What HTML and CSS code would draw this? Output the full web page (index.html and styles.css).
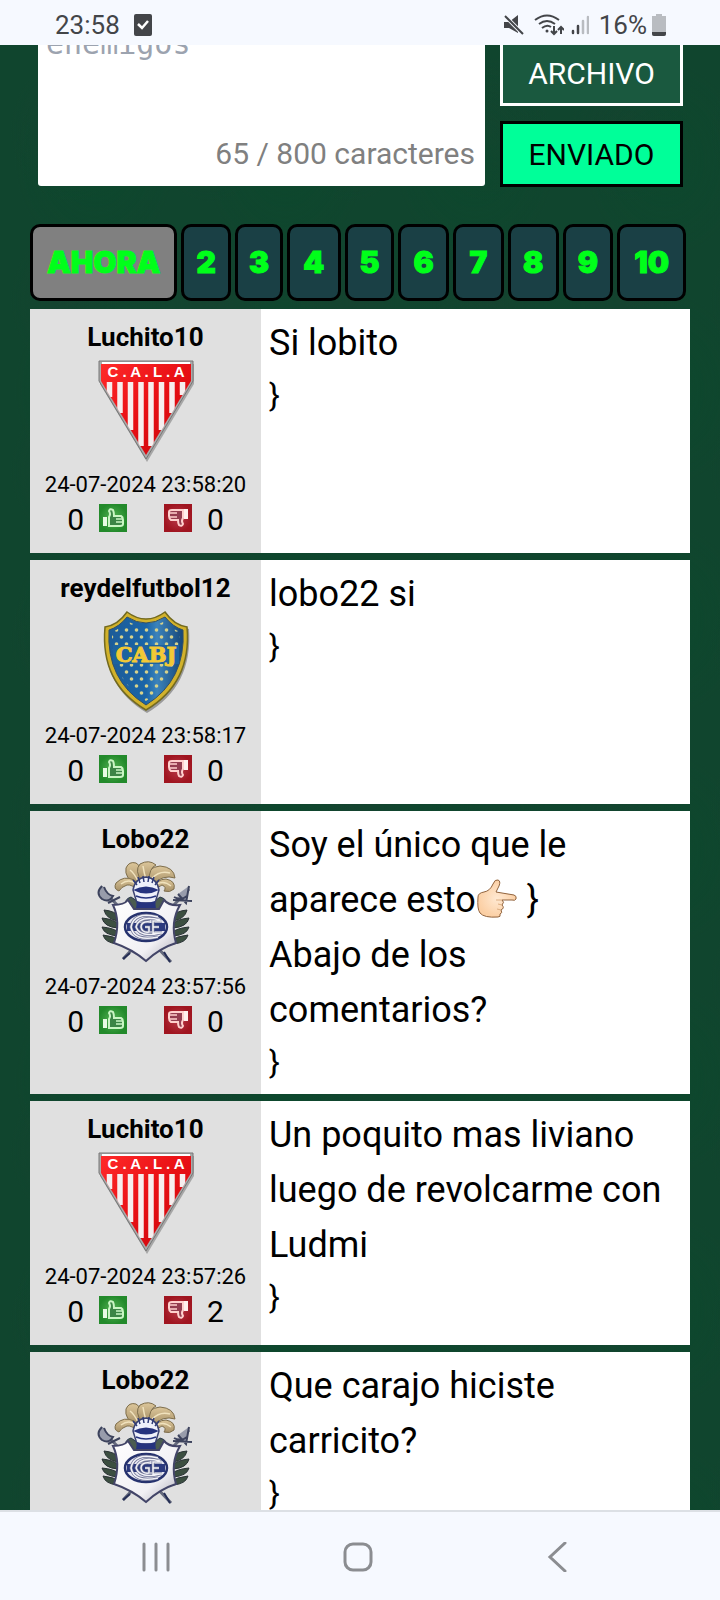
FILE: index.html
```html
<!DOCTYPE html>
<html lang="es">
<head>
<meta charset="utf-8">
<meta name="viewport" content="width=device-width, initial-scale=1">
<title>Comentarios</title>
<link rel="stylesheet" href="styles.css">
</head>
<body>
<svg class="defs" aria-hidden="true">
  <defs>
    <linearGradient id="redG" x1="0" y1="0" x2="1" y2="1"><stop offset="0" stop-color="#ff2a2a"/><stop offset=".5" stop-color="#e80f14"/><stop offset="1" stop-color="#c8060c"/></linearGradient>
    <linearGradient id="blueG" x1="0" y1="0" x2="1" y2="0"><stop offset="0" stop-color="#1d5c98"/><stop offset=".5" stop-color="#1a65a8"/><stop offset=".65" stop-color="#3c83bb"/><stop offset="1" stop-color="#154678"/></linearGradient>
    <linearGradient id="silverG" x1="0" y1="0" x2="1" y2="1"><stop offset="0" stop-color="#fff"/><stop offset=".65" stop-color="#f1f0f4"/><stop offset="1" stop-color="#a9a8b4"/></linearGradient>
    <linearGradient id="plumeG" x1="0" y1="0" x2="0" y2="1"><stop offset="0" stop-color="#dcc69a"/><stop offset="1" stop-color="#a58f66"/></linearGradient>
    <radialGradient id="greenG"><stop offset="0" stop-color="#55b455"/><stop offset="1" stop-color="#238a2b"/></radialGradient>
    <radialGradient id="darkRedG"><stop offset="0" stop-color="#b83a4a"/><stop offset="1" stop-color="#a01520"/></radialGradient>
    <radialGradient id="skinG"><stop offset="0" stop-color="#ffe9d2"/><stop offset="1" stop-color="#fbcfa4"/></radialGradient>
    <pattern id="dots" width="10" height="14" patternUnits="userSpaceOnUse" x="-2" y="3"><circle cx="2.500" cy="3" r="1.800" fill="#d6d28a"/><circle cx="7.500" cy="10" r="1.800" fill="#d6d28a"/></pattern>
    <clipPath id="pennantClip"><path d="M6 23H94V24L50 97L6 24Z"/></clipPath>
  </defs>
  <symbol id="andes" viewBox="0 0 100 104">
    <path d="M4 5H98V25L51 103L4 25Z" fill="#777" opacity=".55"/>
    <path d="M3 2H97V22L50 100L3 22Z" fill="#aaa" stroke="#777" stroke-width="1"/>
    <path d="M5 5H95V22L50 96L5 22Z" fill="url(#redG)"/>
    <path d="M6 4H94" stroke="#fff" stroke-width="2"/>
    <path d="M13.500 21V38M24 21V54M34.500 21V71M45 21V87M55 21V87M65.500 21V71M76 21V54M86.500 21V36" stroke="#f6eeee" stroke-width="5.500" clip-path="url(#pennantClip)"/>
    <text x="50" y="18" text-anchor="middle" class="andes-text">C . A . L . A</text>
  </symbol>
  <symbol id="boca" viewBox="0 0 100 104">
    <path d="M31 3Q50 16 69 3Q79 17 93 19Q97 76 51 103Q5 76 9 19Q22 17 31 3Z" fill="#444" opacity=".45"/>
    <path d="M31 2Q50 16 69 2Q78 15 91 17Q96 73 50 100Q4 73 9 17Q22 15 31 2Z" fill="#d2b22b" stroke="#736a20" stroke-width="1.500"/>
    <path d="M31 7Q50 19 69 7Q77 17 87 20Q90 70 50 95Q10 70 13 20Q23 17 31 7Z" fill="url(#blueG)" stroke="#314f68"/>
    <path d="M31 11Q50 22 69 11Q76 19 84 22Q86 69 50 91Q14 69 16 22Q24 19 31 11Z" fill="url(#dots)"/>
    <rect x="17" y="35" width="66" height="19" fill="#1d639f"/>
    <text x="50" y="52" text-anchor="middle" class="boca-text">CABJ</text>
  </symbol>
  <symbol id="gelp" viewBox="0 0 100 104">
    <path d="M6 28L75 101M93 28L27 98" stroke="#666b7e" stroke-width="3"/>
    <path d="M68 91L74 101M34 92L27 98" stroke="#252e55" stroke-width="2"/>
    <path d="M6 25Q-1 32 6 38Q13 42 17 35Q11 34 8 26M12 42L24 36M77 39L96 40M82 33L90 42L93 25M78 36Q85 40 91 35" fill="#989cab" stroke="#3d435d" stroke-width="2"/>
    <g fill="#3c4f41" stroke="#2a3336">
      <path d="M22 60Q10 58 8 49Q19 50 24 56ZM22 67Q8 66 6 57Q18 58 24 64ZM22 75Q8 74 6 66Q18 67 24 72ZM22 83Q9 82 7 74Q18 75 25 80ZM77 60Q89 58 91 49Q80 50 75 56ZM77 67Q91 66 93 57Q81 58 75 64ZM77 75Q91 74 93 66Q81 67 75 72ZM77 83Q90 82 92 74Q81 75 74 80Z"/>
    </g>
    <g fill="url(#plumeG)" stroke="#7d6d4b">
      <path d="M41 24Q28 17 30 7Q33 0 40 2Q46 5 48 20Z"/>
      <path d="M49 20Q51 6 64 5Q78 6 79 17Q67 13 56 24Z"/>
      <path d="M46 20Q38 10 44 3Q53-2 60 4Q53 7 53 20Z"/>
      <path d="M42 30Q36 23 31 24Q25 26 23 30Q17 28 20 22Q28 14 38 19Q43 22 44 27Z"/>
      <path d="M56 28Q61 18 70 18Q80 20 78 28Q74 32 68 30Q71 26 66 24Q62 25 59 31Z"/>
    </g>
    <path d="M34 9Q38 12 42 20M47 5Q48 12 50 18M56 17Q64 9 74 12M25 23Q33 17 40 23M61 23Q68 19 75 25" fill="none" stroke="#f0e2bd" stroke-width="1.500"/>
    <path d="M31 47Q27 38 35 36L44 42H56L64 36Q73 38 70 48L62 53H39Z" fill="#4b5c50" stroke="#28374b"/>
    <path d="M37 29Q39 17 50 16Q61 17 63 29L59 42H41Z" fill="#eef0fa" stroke="#3b4270" stroke-width="1.500"/>
    <path d="M41 24L37 19M44 22L42 16M48 21L47 15M52 21L53 15M56 22L58 16M59 24L63 19" stroke="#2f3b78" stroke-width="1.500"/>
    <path d="M37 29Q50 22 63 29Q50 36 37 29Z" fill="#26337e"/>
    <path d="M40 35Q50 39 60 35" fill="none" stroke="#26337e" stroke-width="1.500"/>
    <path d="M41 40Q50 43 59 40L60 48H40Z" fill="#26337e"/>
    <path d="M17 44Q28 44 32 39L38 48H63L68 39Q73 45 84 44Q74 61 80 82Q64 87 50 100Q36 88 18 82Q25 61 17 44Z" fill="url(#silverG)" stroke="#434568" stroke-width="2"/>
    <ellipse cx="50" cy="66" rx="21" ry="14" fill="#e8e8f2" stroke="#26326e" stroke-width="2.500"/>
    <path d="M31 62H69V70H31Z" fill="#2b397e"/>
    <path d="M62 56Q38 50 35 66Q38 81 62 76M64 59Q43 54 40 66Q44 77 64 72M54 61Q45 60 45 66Q46 72 53 71V66H49M66 60H57V72H66M57 66H63" fill="none" stroke="#6b7093" stroke-width="3"/>
    <path d="M62 56Q38 50 35 66Q38 81 62 76M64 59Q43 54 40 66Q44 77 64 72M54 61Q45 60 45 66Q46 72 53 71V66H49M66 60H57V72H66M57 66H63" fill="none" stroke="#f3f3f8" stroke-width="1.500"/>
  </symbol>
  <symbol id="up" viewBox="0 0 28 28">
    <rect width="28" height="28" fill="url(#greenG)"/>
    <path d="M4 13H8V22H4Z" fill="#e8fbe4"/>
    <path d="M10 13Q12 10 10 7Q11 4 14 6Q15 8 15 12H22Q24 13 24 16V20Q24 22 21 22H10Z" fill="#3c8546" stroke="#c9f5c3" stroke-width="2"/>
    <path d="M17 15H23M17 18H23" stroke="#c9f5c3" stroke-width="1.500"/>
  </symbol>
  <symbol id="down" viewBox="0 0 28 28">
    <rect width="28" height="28" fill="url(#darkRedG)"/>
    <path d="M20 5H24V15H20Z" fill="#fff0ed"/>
    <path d="M19 14Q17 17 19 20Q18 23 15 21Q14 19 14 16H7Q5 15 5 12V8Q5 6 8 6H19Z" fill="#943d50" stroke="#ffd0cd" stroke-width="2"/>
    <path d="M6 9H13M6 13H13" stroke="#ffd0cd" stroke-width="1.500"/>
  </symbol>
</svg>

<header class="status">
  <div class="status-group">
    <span>23:58</span>
    <svg width="18" height="22" viewBox="0 0 18 22"><rect width="18" height="22" rx="2" fill="#434549"/><path d="M4 10L8 14L14 7" fill="none" stroke="#fff" stroke-width="2.500"/></svg>
  </div>
  <div class="status-group status-right">
    <svg width="20" height="22" viewBox="0 0 20 22"><path d="M0 8H5L14 1V19L5 14H0Z" fill="#434549"/><path d="M1 2L19 20" stroke="#f6f9ff" stroke-width="4"/><path d="M1 2L19 20" stroke="#434549" stroke-width="2"/></svg>
    <svg class="wifi" width="30" height="22" viewBox="0 0 30 22" fill="none" stroke="#434549" stroke-width="2"><path d="M1 6Q13-3 25 6M5 10Q13 4 21 10M8 14Q13 10 17 13"/><circle cx="13" cy="17" r="1.500" fill="#434549" stroke="none"/><path d="M20 12V20M17 17L20 20L23 17M27 20V13M24 16L27 13L30 16"/></svg>
    <svg width="18" height="20" viewBox="0 0 18 20" stroke-width="2.500" stroke-linecap="round"><path d="M2 16V18M7 11V18" stroke="#434549"/><path d="M12 6V18M17 2V18" stroke="#b9bcc1"/></svg>
    <span class="battery">16%<svg width="14" height="22" viewBox="0 0 14 22"><path d="M4 2V0H10V2H14V20Q14 22 12 22H2Q0 22 0 20V2Z" fill="#b9bcc1"/><path d="M0 18H14V20Q14 22 12 22H2Q0 22 0 20Z" fill="#434549"/></svg></span>
  </div>
</header>

<main class="page">
  <form class="composer">
    <div class="editor">
      <textarea class="message" aria-label="Mensaje" placeholder="enemigos"></textarea>
      <p class="count">65 / 800 caracteres</p>
    </div>
    <div class="actions">
      <button type="button" class="action file">ARCHIVO</button>
      <button type="button" class="action send">ENVIADO</button>
    </div>
  </form>

  <nav class="pager" aria-label="Páginas">
    <button class="page-button current" aria-current="page">AHORA</button>
    <button class="page-button">2</button>
    <button class="page-button">3</button>
    <button class="page-button">4</button>
    <button class="page-button">5</button>
    <button class="page-button">6</button>
    <button class="page-button">7</button>
    <button class="page-button">8</button>
    <button class="page-button">9</button>
    <button class="page-button">10</button>
  </nav>

  <section class="posts">
    <article class="post">
      <aside class="author">
        <h2 class="name">Luchito10</h2>
        <svg class="crest"><use href="#andes"/></svg>
        <time class="date">24-07-2024 23:58:20</time>
        <div class="votes"><span>0</span><button class="vote" aria-label="Me gusta"><svg><use href="#up"/></svg></button><button class="vote vote-down" aria-label="No me gusta"><svg><use href="#down"/></svg></button><span>0</span></div>
      </aside>
      <div class="body"><p class="text">Si lobito</p><p class="brace">}</p></div>
    </article>
    <article class="post">
      <aside class="author">
        <h2 class="name">reydelfutbol12</h2>
        <svg class="crest"><use href="#boca"/></svg>
        <time class="date">24-07-2024 23:58:17</time>
        <div class="votes"><span>0</span><button class="vote" aria-label="Me gusta"><svg><use href="#up"/></svg></button><button class="vote vote-down" aria-label="No me gusta"><svg><use href="#down"/></svg></button><span>0</span></div>
      </aside>
      <div class="body"><p class="text">lobo22 si</p><p class="brace">}</p></div>
    </article>
    <article class="post">
      <aside class="author">
        <h2 class="name">Lobo22</h2>
        <svg class="crest"><use href="#gelp"/></svg>
        <time class="date">24-07-2024 23:57:56</time>
        <div class="votes"><span>0</span><button class="vote" aria-label="Me gusta"><svg><use href="#up"/></svg></button><button class="vote vote-down" aria-label="No me gusta"><svg><use href="#down"/></svg></button><span>0</span></div>
      </aside>
      <div class="body"><p class="text">Soy el único que le<br>aparece esto<svg class="hand" role="img" aria-label="Mano señalando a la derecha" viewBox="0 0 42 40"><path d="M2 18Q2 14 8 13Q14 12 17 5Q19 0 22 1Q25 2 23 7L20 13L38 16Q41 17 40 20Q39 22 36 21L26 21Q29 23 26 26Q29 29 25 31Q27 34 24 35Q25 38 22 38Q8 39 4 34Q1 30 2 18Z" fill="url(#skinG)" stroke="#91633d" stroke-width="1"/><path d="M26 21L20 21M26 26L22 25M25 31L21 30" stroke="#dcae82"/></svg> }<br>Abajo de los<br>comentarios?</p><p class="brace">}</p></div>
    </article>
    <article class="post">
      <aside class="author">
        <h2 class="name">Luchito10</h2>
        <svg class="crest"><use href="#andes"/></svg>
        <time class="date">24-07-2024 23:57:26</time>
        <div class="votes"><span>0</span><button class="vote" aria-label="Me gusta"><svg><use href="#up"/></svg></button><button class="vote vote-down" aria-label="No me gusta"><svg><use href="#down"/></svg></button><span>2</span></div>
      </aside>
      <div class="body"><p class="text">Un poquito mas liviano<br>luego de revolcarme con<br>Ludmi</p><p class="brace">}</p></div>
    </article>
    <article class="post">
      <aside class="author">
        <h2 class="name">Lobo22</h2>
        <svg class="crest"><use href="#gelp"/></svg>
      </aside>
      <div class="body"><p class="text">Que carajo hiciste<br>carricito?</p><p class="brace">}</p></div>
    </article>
  </section>
</main>

<footer class="system-nav">
  <button class="nav-button" aria-label="Recientes"><svg width="30" height="30" viewBox="0 0 30 30"><path d="M3 2V28M15 2V28M27 2V28"/></svg></button>
  <button class="nav-button" aria-label="Inicio"><svg width="30" height="30" viewBox="0 0 30 30"><rect x="2" y="2" width="26" height="26" rx="8"/></svg></button>
  <button class="nav-button" aria-label="Atrás"><svg width="30" height="30" viewBox="0 0 30 30"><path d="M20 1L5 15L20 29"/></svg></button>
</footer>
</body>
</html>
```
FILE: styles.css
```css
* { box-sizing: border-box; }
body {
  margin: 0;
  height: 100vh;
  display: flex;
  flex-direction: column;
  overflow: hidden;
  background: #10452e;
  color: #000;
  font-family: Roboto, "Liberation Sans", sans-serif;
}
p, h2 { margin: 0; }
button { font-family: inherit; cursor: pointer; }
.defs { position: absolute; width: 0; height: 0; }
.andes-text { font: 700 15px "Liberation Sans", sans-serif; fill: #fff; }
.boca-text { font: 700 21px "DejaVu Serif", serif; fill: #f3c936; stroke: #f3c936; stroke-width: 1px; }

.status {
  flex: none;
  height: 45px;
  padding: 4px 54px 0 55px;
  display: flex;
  justify-content: space-between;
  align-items: center;
  background: #f6f9ff;
  color: #434549;
  font-size: 26px;
}
.status-group { display: flex; align-items: center; gap: 14px; }
.status-right { gap: 10px; }
.wifi { margin-right: -3px; }
.battery { display: flex; align-items: center; gap: 5px; }

.page {
  flex: 1;
  min-height: 0;
  overflow: hidden;
  padding: 0 30px;
  background:
    radial-gradient(ellipse at center, rgba(4, 78, 42, 0.3), transparent 60%) 0 0 / 190px 230px,
    radial-gradient(ellipse at center, rgba(28, 64, 50, 0.4), transparent 60%) 0 0 / 140px 170px,
    #10452e;
}
.composer {
  display: grid;
  grid-template-columns: 1fr 183px;
  gap: 15px;
  padding: 0 7px 0 8px;
  margin-top: -14px;
}
.editor {
  display: flex;
  flex-direction: column;
  height: 155px;
  background: #fff;
  border-radius: 3px;
  overflow: hidden;
}
.message {
  flex: 1;
  min-height: 0;
  border: 0;
  padding: 0 8px;
  resize: none;
  overflow: hidden;
  background: transparent;
  font: 30px/26px "DejaVu Sans Mono", monospace;
}
.message::placeholder { color: #9ca3af; opacity: 1; }
.count { padding: 0 10px 14px; text-align: right; font-size: 30px; line-height: 36px; color: #808080; }
.actions { display: flex; flex-direction: column; justify-content: flex-end; gap: 15px; height: 156px; }
.action { height: 66px; padding: 0; border: 3px solid; border-radius: 0; font-size: 30px; }
.file { background: #1a593f; border-color: #fff; color: #fff; }
.send { background: #00ff99; border-color: #000; color: #000; }

.pager {
  display: grid;
  grid-template-columns: 148fr 50fr 48fr 54fr 50fr 51fr 51fr 51fr 51fr 69fr;
  gap: 4px;
  margin: 37px 4px 8px 0;
}
.page-button {
  min-width: 0;
  height: 77px;
  padding: 0 0 2px;
  border: 3px solid #000;
  border-radius: 10px;
  background: #1a4045;
  color: #00ff1a;
  font: 900 30px Inter, Roboto, sans-serif;
  -webkit-text-stroke: 1px #00ff1a;
}
.current { background: #808080; }

.posts { display: grid; gap: 7px; }
.post { display: grid; grid-template-columns: 35fr 65fr; min-height: 244px; background: #fff; }
.author { display: flex; flex-direction: column; align-items: center; padding-top: 12px; background: #e0e0e0; }
.name { font-size: 26px; line-height: 32px; font-weight: 700; }
.crest { width: 100px; height: 104px; margin-top: 6px; flex: none; }
.date { margin-top: 8px; font-size: 22px; line-height: 28px; }
.votes { display: flex; align-items: flex-start; font-size: 30px; line-height: 40px; gap: 15px; margin-top: 1px; }
.vote { width: 28px; height: 28px; margin-top: 4px; padding: 0; border: 0; background: none; }
.vote svg { display: block; width: 28px; height: 28px; }
.vote-down { margin-left: 22px; }
.body { padding: 7px 8px 8px; min-width: 0; }
.text { font-size: 36px; line-height: 55px; }
.brace { font-size: 32px; line-height: 48px; }
.hand { width: 42px; height: 40px; vertical-align: -7px; }

.system-nav {
  flex: none;
  height: 90px;
  display: flex;
  justify-content: space-between;
  align-items: center;
  padding: 2px 145px 0 141px;
  border-top: 2px solid #dce0e5;
  background: #f6f9ff;
}
.nav-button { padding: 0; border: 0; background: none; display: flex; }
.nav-button svg { fill: none; stroke: #8b8d91; stroke-width: 3; stroke-linecap: round; }
```
